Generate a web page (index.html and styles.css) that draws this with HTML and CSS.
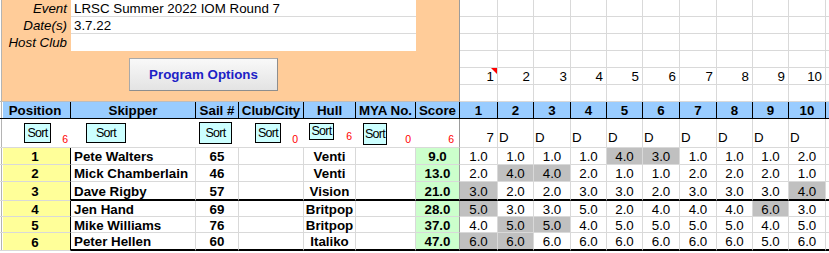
FILE: index.html
```html
<!DOCTYPE html>
<html>
<head>
<meta charset="utf-8">
<title>LRSC Summer 2022 IOM Round 7</title>
<link rel="stylesheet" href="styles.css">
</head>
<body>
<div class="sheet">
  <div class="info">
    <div class="fields">
      <div class="lbl">Event</div><div class="val">LRSC Summer 2022 IOM Round 7</div>
      <div class="lbl">Date(s)</div><div class="val">3.7.22</div>
      <div class="lbl">Host Club</div><div class="val last"></div>
    </div>
    <button class="prog">Program Options</button>
  </div>

  <!-- top right grid rows 1-4 -->
  <div class="c"></div><div class="c"></div><div class="c"></div><div class="c"></div><div class="c"></div><div class="c"></div><div class="c"></div><div class="c"></div><div class="c"></div><div class="c"></div><div class="c"></div>
  <div class="c"></div><div class="c"></div><div class="c"></div><div class="c"></div><div class="c"></div><div class="c"></div><div class="c"></div><div class="c"></div><div class="c"></div><div class="c"></div><div class="c"></div>
  <div class="c"></div><div class="c"></div><div class="c"></div><div class="c"></div><div class="c"></div><div class="c"></div><div class="c"></div><div class="c"></div><div class="c"></div><div class="c"></div><div class="c"></div>
  <div class="c"></div><div class="c"></div><div class="c"></div><div class="c"></div><div class="c"></div><div class="c"></div><div class="c"></div><div class="c"></div><div class="c"></div><div class="c"></div><div class="c"></div>
  <!-- row 5: race numbers -->
  <div class="c n cm">1</div><div class="c n">2</div><div class="c n">3</div><div class="c n">4</div><div class="c n">5</div><div class="c n">6</div><div class="c n">7</div><div class="c n">8</div><div class="c n">9</div><div class="c n">10</div><div class="c"></div>
  <!-- row 6 -->
  <div class="c"></div><div class="c"></div><div class="c"></div><div class="c"></div><div class="c"></div><div class="c"></div><div class="c"></div><div class="c"></div><div class="c"></div><div class="c"></div><div class="c"></div>

  <!-- header -->
  <div class="h edge">Position</div>
  <div class="h">Skipper</div>
  <div class="h">Sail #</div>
  <div class="h">Club/City</div>
  <div class="h">Hull</div>
  <div class="h">MYA No.</div>
  <div class="h">Score</div>
  <div class="h">1</div><div class="h">2</div><div class="h">3</div><div class="h">4</div><div class="h">5</div><div class="h">6</div><div class="h">7</div><div class="h">8</div><div class="h">9</div><div class="h">10</div>
  <div class="h hx"></div>

  <!-- sort row -->
  <div class="s edge"><button class="sort bA">Sort</button><span class="red rA">6</span></div>
  <div class="s"><button class="sort bB">Sort</button></div>
  <div class="s"><button class="sort bC">Sort</button></div>
  <div class="s"><button class="sort bD">Sort</button><span class="red rD">0</span></div>
  <div class="s"><button class="sort bE">Sort</button><span class="red rE">6</span></div>
  <div class="s"><button class="sort bF">Sort</button><span class="red rF">0</span></div>
  <div class="s sg"><span class="red rG">6</span></div>
  <div class="s sr"><span class="cnt">7</span></div>
  <div class="s sr"><span class="dq">D</span></div>
  <div class="s sr"><span class="dq">D</span></div>
  <div class="s sr"><span class="dq">D</span></div>
  <div class="s sr"><span class="dq">D</span></div>
  <div class="s sr"><span class="dq">D</span></div>
  <div class="s sr"><span class="dq">D</span></div>
  <div class="s sr"><span class="dq">D</span></div>
  <div class="s sr"><span class="dq">D</span></div>
  <div class="s sr"><span class="dq">D</span></div>
  <div class="s sr"></div>

  <!-- data row 1 -->
  <div class="d pos edge">1</div><div class="d name">Pete Walters</div><div class="d">65</div><div class="d"></div><div class="d">Venti</div><div class="d"></div><div class="d score">9.0</div>
  <div class="d r">1.0</div><div class="d r">1.0</div><div class="d r">1.0</div><div class="d r">1.0</div><div class="d r x">4.0</div><div class="d r x">3.0</div><div class="d r">1.0</div><div class="d r">1.0</div><div class="d r">1.0</div><div class="d r">2.0</div><div class="d r"></div>

  <!-- data row 2 -->
  <div class="d pos edge">2</div><div class="d name">Mick Chamberlain</div><div class="d">46</div><div class="d"></div><div class="d">Venti</div><div class="d"></div><div class="d score">13.0</div>
  <div class="d r">2.0</div><div class="d r x">4.0</div><div class="d r x">4.0</div><div class="d r">2.0</div><div class="d r">1.0</div><div class="d r">1.0</div><div class="d r">2.0</div><div class="d r">2.0</div><div class="d r">2.0</div><div class="d r">1.0</div><div class="d r"></div>

  <!-- data row 3 -->
  <div class="d pos edge">3</div><div class="d name t">Dave Rigby</div><div class="d t">57</div><div class="d t"></div><div class="d t">Vision</div><div class="d t"></div><div class="d score t">21.0</div>
  <div class="d r x t">3.0</div><div class="d r t">2.0</div><div class="d r t">2.0</div><div class="d r t">3.0</div><div class="d r t">3.0</div><div class="d r t">2.0</div><div class="d r t">3.0</div><div class="d r t">3.0</div><div class="d r t">3.0</div><div class="d r x t">4.0</div><div class="d r t"></div>

  <!-- data row 4 -->
  <div class="d pos edge">4</div><div class="d name">Jen Hand</div><div class="d">69</div><div class="d"></div><div class="d">Britpop</div><div class="d"></div><div class="d score">28.0</div>
  <div class="d r x">5.0</div><div class="d r">3.0</div><div class="d r">3.0</div><div class="d r">5.0</div><div class="d r">2.0</div><div class="d r">4.0</div><div class="d r">4.0</div><div class="d r">4.0</div><div class="d r x">6.0</div><div class="d r">3.0</div><div class="d r"></div>

  <!-- data row 5 -->
  <div class="d pos edge">5</div><div class="d name">Mike Williams</div><div class="d">76</div><div class="d"></div><div class="d">Britpop</div><div class="d"></div><div class="d score">37.0</div>
  <div class="d r">4.0</div><div class="d r x">5.0</div><div class="d r x">5.0</div><div class="d r">4.0</div><div class="d r">5.0</div><div class="d r">5.0</div><div class="d r">5.0</div><div class="d r">5.0</div><div class="d r">4.0</div><div class="d r">5.0</div><div class="d r"></div>

  <!-- data row 6 -->
  <div class="d pos edge">6</div><div class="d name t">Peter Hellen</div><div class="d t">60</div><div class="d t"></div><div class="d t">Italiko</div><div class="d t"></div><div class="d score t">47.0</div>
  <div class="d r x t">6.0</div><div class="d r x t">6.0</div><div class="d r t">6.0</div><div class="d r t">6.0</div><div class="d r t">6.0</div><div class="d r t">6.0</div><div class="d r t">6.0</div><div class="d r t">6.0</div><div class="d r t">5.0</div><div class="d r t">6.0</div><div class="d r t"></div>
</div>
</body>
</html>
```

FILE: styles.css
```css
html, body {
  margin: 0;
  padding: 0;
  background: #fff;
  overflow: hidden;
}

body {
  font-family: "Liberation Sans", Arial, sans-serif;
  font-size: 13.33px;
  color: #000;
}

* {
  box-sizing: border-box;
}

.sheet {
  display: grid;
  width: 865px;
  grid-template-columns: 71px 125px 43px 65px 52px 60px 44px 38px 36px 37px 36px 36px 37px 37px 36px 36px 37px 40px;
  grid-template-rows: 17px 17px 17px 17px 17px 17px 17px 29px 17px 17px 19px 16px 16px 18px;
}

/* ---- top info block ---- */
.info {
  grid-column: 1 / 8;
  grid-row: 1 / 7;
  background: #ffcc99;
  border-right: 1px solid #9c9c9c;
  border-bottom: 1px solid #bdbdbd;
  box-shadow: inset 1px 0 0 #fff, inset 2px 0 0 #b4b4b4;
  display: flex;
  flex-direction: column;
  align-items: flex-start;
}

.fields {
  display: grid;
  grid-template-columns: 71px 345px;
  grid-auto-rows: 17px;
}

.lbl {
  font-style: italic;
  text-align: right;
  padding: 1px 4px 0 0;
  line-height: 16px;
  white-space: nowrap;
}

.val {
  background: #fff;
  padding: 1px 0 0 3px;
  line-height: 15px;
  border-bottom: 1px solid #dadada;
  white-space: nowrap;
}

.val.last {
  border-bottom: none;
}

.prog {
  margin: 7px 0 0 129px;
  width: 149px;
  height: 33px;
  padding: 0;
  font-family: "Liberation Sans", Arial, sans-serif;
  font-size: 13.33px;
  font-weight: bold;
  color: #1d22c6;
  background: linear-gradient(#f9f9f9, #e3e3e3);
  border: 1px solid #a9a9a9;
  border-right-color: #8e8e8e;
  border-bottom-color: #8e8e8e;
  border-radius: 0;
}

/* ---- plain grid cells ---- */
.c {
  border-right: 1px solid #d9d9d9;
  border-bottom: 1px solid #d9d9d9;
}

.n {
  display: flex;
  align-items: center;
  justify-content: flex-end;
  padding-right: 3px;
  padding-top: 1px;
}

.cm {
  position: relative;
}

.cm::after {
  content: "";
  position: absolute;
  top: 0;
  right: 0;
  border-top: 6px solid #ff0000;
  border-left: 6px solid transparent;
}

/* ---- left edge gridline ---- */
.edge {
  box-shadow: inset 1px 0 0 #fff, inset 2px 0 0 #b4b4b4, inset 3px 0 0 #fff;
}

/* ---- header row ---- */
.h {
  background: #99ccff;
  border-right: 1px solid #000;
  border-bottom: 1px solid #000;
  font-weight: bold;
  display: flex;
  align-items: center;
  justify-content: center;
  white-space: nowrap;
}

.h.hx {
  border-right: none;
}

/* ---- sort row ---- */
.s {
  display: flex;
  align-items: flex-start;
  border-bottom: 1px solid #d9d9d9;
  background: #fff;
}

.s.sg {
  border-right: 1px solid #9c9c9c;
}

.s.sr {
  border-right: 1px solid #d9d9d9;
}

.sort {
  margin-top: 4px;
  height: 20px;
  padding: 0;
  border: 1px solid #000;
  border-radius: 0;
  background: #ccffff;
  color: #000;
  font-family: "Liberation Sans", Arial, sans-serif;
  font-size: 12.5px;
  letter-spacing: -0.7px;
  line-height: 1;
  display: flex;
  align-items: center;
  justify-content: center;
  white-space: nowrap;
}

.bA { width: 27px; margin-left: 24px; }
.bB { width: 40px; margin-left: 15px; }
.bC { width: 33px; height: 22px; margin-top: 3px; margin-left: 3px; }
.bD { width: 26px; margin-left: 16px; }
.bE { width: 25px; height: 17px; margin-left: 5px; }
.bF { width: 24px; height: 22px; margin-left: 7px; }

.red {
  margin-left: auto;
  align-self: flex-end;
  color: #f00;
  font-size: 10.5px;
  line-height: 10px;
  margin-bottom: 3px;
}

.rA { margin-right: 3px; }
.rD { margin-right: 6px; }
.rE { margin-right: 4px; margin-bottom: 6px; }
.rF { margin-right: 5px; }
.rG { margin-right: 5px; }

.cnt {
  margin-left: auto;
  margin-right: 3px;
  align-self: flex-end;
  line-height: 14px;
  margin-bottom: 2px;
}

.dq {
  padding-left: 1px;
  align-self: flex-end;
  line-height: 14px;
  margin-bottom: 2px;
}

/* ---- data rows ---- */
.d {
  border-right: 1px solid #d9d9d9;
  border-bottom: 1px solid #d9d9d9;
  display: flex;
  align-items: center;
  justify-content: center;
  font-weight: bold;
  white-space: nowrap;
  padding-top: 1px;
  background: #fff;
}

.d.name {
  justify-content: flex-start;
  padding-left: 3px;
}

.d.pos {
  background: #ffff99;
  border-right-color: #000;
}

.d.score {
  background: #ccffcc;
  border-right-color: #9c9c9c;
}

.d.r {
  font-weight: normal;
}

.d.x {
  background: #c0c0c0;
}

.d.t {
  border-bottom: 2px solid #000;
}
```
